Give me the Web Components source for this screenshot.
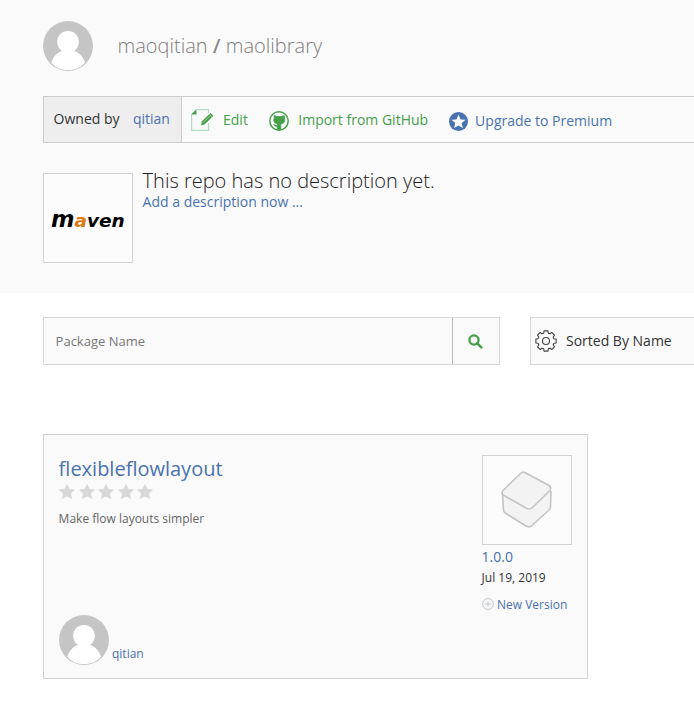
<!DOCTYPE html>
<html lang="en"><head><meta charset="utf-8"><title>maoqitian / maolibrary</title>
<style>
body{margin:0;background:#fff;color:#333;font-family:"Open Sans",sans-serif;overflow:hidden;width:694px;height:708px}
</style></head><body>
<repo-page></repo-page>
<script>
const define = (name, html) => customElements.define(name, class extends HTMLElement {
  constructor() { super(); this.attachShadow({ mode: 'open' }).innerHTML = html; }
});

define('user-avatar', `<style>:host{display:block;width:50px;height:50px;flex:none}svg{display:block}</style>
<svg width="50" height="50" viewBox="0 0 50 50"><defs><clipPath id="c"><circle cx="25" cy="25" r="25"/></clipPath></defs>
<g clip-path="url(#c)"><rect width="50" height="50" fill="#c5c5c5"/><path d="M25 10c6.200 0 10.800 4.600 10.800 10.700 0 4-1.800 7.300-4.600 9.300 5.300 2 8.800 5.700 10.800 11.500C38 46.500 32 49 25 49S12 46.500 8.300 41.500c2-5.800 5.400-9.500 10.600-11.500-2.900-2-4.700-5.300-4.700-9.300C14.200 14.600 18.800 10 25 10z" fill="#fff"/></g></svg>`);

define('action-link', `<style>:host{display:flex;align-items:center;font-size:14px;line-height:19px;white-space:nowrap;color:#469f49}
:host([tone=blue]){color:#4a72af}::slotted(svg){display:block;flex:none}</style><slot name="icon"></slot><slot></slot>`);

define('owner-tag', `<style>:host{display:flex;box-sizing:border-box;width:138px;align-items:center;padding:0 0 2px 9.600px;gap:13.400px;background:#eee;border-right:1px solid #ccc;font-size:14px;white-space:nowrap}
::slotted(a){color:#4a72af}</style><slot></slot>`);

define('action-bar', `<style>:host{display:flex;box-sizing:border-box;height:47px;border:1px solid #ccc;border-right:0;background:#fafafa}</style><slot></slot>`);

define('image-frame', `<style>:host{display:flex;box-sizing:border-box;flex:none;width:90px;height:90px;border:1px solid #d3d3d3;background:#fcfcfc}::slotted(svg){display:block}</style><slot></slot>`);

define('star-rating', `<style>:host{display:flex;gap:3.500px}svg{display:block;width:16px;height:16px}</style>` +
 '<svg viewBox="0 0 16 16"><path d="M8 .6l2.300 4.700 5.200.6-3.900 3.500 1.100 5.200L8 12.100l-4.700 2.500 1.100-5.200L.5 5.900l5.200-.6z" fill="#d8d8d8" stroke="#d8d8d8" stroke-width=".7" stroke-linejoin="round"/></svg>'.repeat(5));

define('search-field', `<style>:host{display:flex;box-sizing:border-box;width:457px;height:48px;border:1px solid #d8d8d8;background:#fafafa;font-size:13px;color:#777}
.t{flex:1;padding-left:11.600px;line-height:46px}.b{width:46px;border-left:1px solid #b9b9b9;display:flex;align-items:center;justify-content:center}svg{display:block;margin-left:-2px;margin-top:1px}</style>
<div class="t"><slot></slot></div><div class="b"><svg width="15" height="15" viewBox="0 0 15 15" fill="none" stroke="#469f49"><circle cx="6" cy="6" r="4.600" stroke-width="2.300"/><path d="M9.300 9.300l4 4" stroke-width="2.600" stroke-linecap="round"/></svg></div>`);

define('sort-box', `<style>:host{display:flex;align-items:center;box-sizing:border-box;flex:1;height:48px;border:1px solid #d8d8d8;border-right:0;background:#fafafa;padding:0 0 1px 4px;gap:9px;font-size:14px;color:#333}svg{display:block}</style>
<svg width="22" height="22" viewBox="-11 -11 22 22" fill="none" stroke="#444" stroke-width="1.100" stroke-linejoin="round"><circle r="3.500"/><path id="g"/></svg><slot></slot>`);

define('package-card', `<style>:host{display:flex;justify-content:space-between;box-sizing:border-box;width:545px;height:245px;border:1px solid #d3d3d3;background:#fafafa;padding:20px 15px 13px}
.l{display:flex;flex-direction:column}.n{font-size:20px;line-height:27px;color:#4a72af;margin:0 0 2px -.400px}.d{font-size:12px;line-height:17px;color:#666;margin:10px 0 0 -.400px}
.o{margin-top:auto;display:flex;align-items:flex-end;gap:3px;font-size:12px;line-height:17px;color:#4a72af}.o span{padding-bottom:3px}
.r{width:90px;font-size:12px;white-space:nowrap}.v{font-size:14px;line-height:19px;color:#4a72af;margin:2px 0 0 -.400px}.dt{line-height:17px;margin:3px 0 0 -.400px;color:#333}.w{display:flex;align-items:center;gap:3px;line-height:17px;color:#4a72af;margin-top:10px}svg{display:block}.w svg{margin-top:-2px}</style>
<div class="l"><div class="n"><slot name="name"></slot></div><star-rating></star-rating><div class="d"><slot name="description"></slot></div><div class="o"><user-avatar></user-avatar><span><slot name="owner"></slot></span></div></div>
<div class="r"><image-frame><svg width="88" height="88" viewBox="0 0 88 88" fill="#f3f3f3" stroke="#c4c4c4" stroke-width="1.600" stroke-linejoin="round"><path d="M19.500 38 20.500 54q0 2 2 3.200L43 70q3.500 2 6-.5L66 54q1.500-1.500 1.500-3L68 35"/><path d="M20 34.500 37.500 17.500q2.500-2 5-.7L66 29.500q3 2 .8 5L49.500 51.500q-2.500 2.500-6 .8L21 39.500q-3.500-2-1-5z"/></svg></image-frame>
<div class="v"><slot name="version"></slot></div><div class="dt"><slot name="date"></slot></div><div class="w"><svg width="12" height="12" viewBox="0 0 12 12" fill="none" stroke="#b3b9c6" stroke-width=".8"><circle cx="6" cy="6" r="5.400"/><path d="M6 3v6M3 6h6"/></svg><span>New Version</span></div></div>`);

define('repo-page', `<style>
:host{display:block;width:694px}
header{box-sizing:border-box;height:293px;background:#fafafa;padding:21px 0 0 43px}
.top{display:flex;align-items:center;height:50px;gap:24.600px;margin-bottom:25px}
h1{margin:-2px 0 0;font-size:20px;font-weight:300;color:#808080;line-height:27px;white-space:nowrap}h1 b{font-weight:600;color:#8c8c8c}
.desc{display:flex;gap:9.600px;margin-top:30px}
h2{margin:-4px 0 0;font-size:20px;font-weight:300;line-height:23px;color:#222}
.add{font-size:14px;line-height:19px;color:#4a72af}
main{padding:24px 0 0 43px}.tools{display:flex;gap:30px;margin-bottom:69px}
</style>
<header>
<div class="top"><user-avatar></user-avatar><h1>maoqitian <b>/</b> maolibrary</h1></div>
<action-bar>
<owner-tag><span>Owned by</span><a>qitian</a></owner-tag>
<action-link style="padding:0 0 1px 9px">
<svg slot="icon" style="margin-right:9px;margin-top:2px" width="23" height="23" viewBox="0 0 23 23"><path d="M.6 5.800V21.400H17.600V14M5.500.7H17.500V4" fill="none" stroke="#b5d9c4" stroke-width="1.200"/><path d="M0 5.500 5.500.3V5.500z" fill="#469f49"/><path d="M11 12.300 19.500 4l2.900 2.700-8.500 8.500-3.900 1.300z" fill="#469f49"/><path d="M12.300 13.500 19.300 6.500M18 5.200l3 3" stroke="#b9e0b8" stroke-width=".7"/></svg>Edit</action-link>
<action-link style="padding:0 0 1px 21px">
<svg slot="icon" style="margin-right:9.400px;margin-top:3px" width="20" height="20" viewBox="0 0 20 20"><circle cx="10" cy="10" r="9.200" fill="#fff" stroke="#469f49" stroke-width="1.500"/><path d="M4.800 4.700q1.800.1 2.800.9h4.800q1-.8 2.800-.9.500 1.400.1 2.400.7 1.200.4 3-.5 2.500-3.700 3-.4.500-.2 1.500v4q-1.800.6-3.600 0v-3q-2 .3-2.700-1l-.8-1q1.300-.2 1.900.7.800.6 1.600.2.100-.8.400-1.400-3.200-.5-3.700-3-.3-1.800.4-3-.4-1 .1-2.400z" fill="#469f49" stroke="#469f49" stroke-width=".8"/></svg>Import from GitHub</action-link>
<action-link tone="blue" style="padding:2px 0 0 21px">
<svg slot="icon" style="margin-right:7px;margin-top:1px" width="19" height="19" viewBox="0 0 19 19"><circle cx="9.500" cy="9.500" r="9.500" fill="#4a72af"/><path d="M9.500 2.700l2 4.700 5 .4-3.800 3.300 1.200 5-4.400-2.700-4.400 2.700 1.200-5-3.800-3.300 5-.4z" fill="#fff"/></svg>Upgrade to Premium</action-link>
</action-bar>
<div class="desc"><image-frame><svg width="88" height="88" viewBox="0 0 88 88" font-family="DejaVu Sans" font-weight="700" font-style="oblique" font-size="18.500"><text x="7" y="53"><tspan font-size="22.500">m</tspan><tspan fill="#dd7a14">a</tspan>ven</text></svg></image-frame>
<div><h2>This repo has no description yet.</h2><div class="add">Add a description now ...</div></div></div>
</header>
<main><div class="tools"><search-field>Package Name</search-field><sort-box>Sorted By Name</sort-box></div>
<package-card><span slot="name">flexibleflowlayout</span><span slot="description">Make flow layouts simpler</span><span slot="owner">qitian</span><span slot="version">1.0.0</span><span slot="date">Jul 19, 2019</span></package-card>
</main>`);

// Eight-tooth gear outline
const gear = [];
for (let i = 0; i < 8; i++) {
  for (const [off, r] of [[-16, 8.2], [-11, 10.3], [11, 10.3], [16, 8.2]]) {
    const a = (i * 45 + off) * Math.PI / 180;
    gear.push((r * Math.cos(a)).toFixed(2) + ' ' + (r * Math.sin(a)).toFixed(2));
  }
}
document.querySelector('repo-page').shadowRoot.querySelector('sort-box').shadowRoot.querySelector('#g').setAttribute('d', 'M' + gear.join('L') + 'Z');
</script></body></html>
